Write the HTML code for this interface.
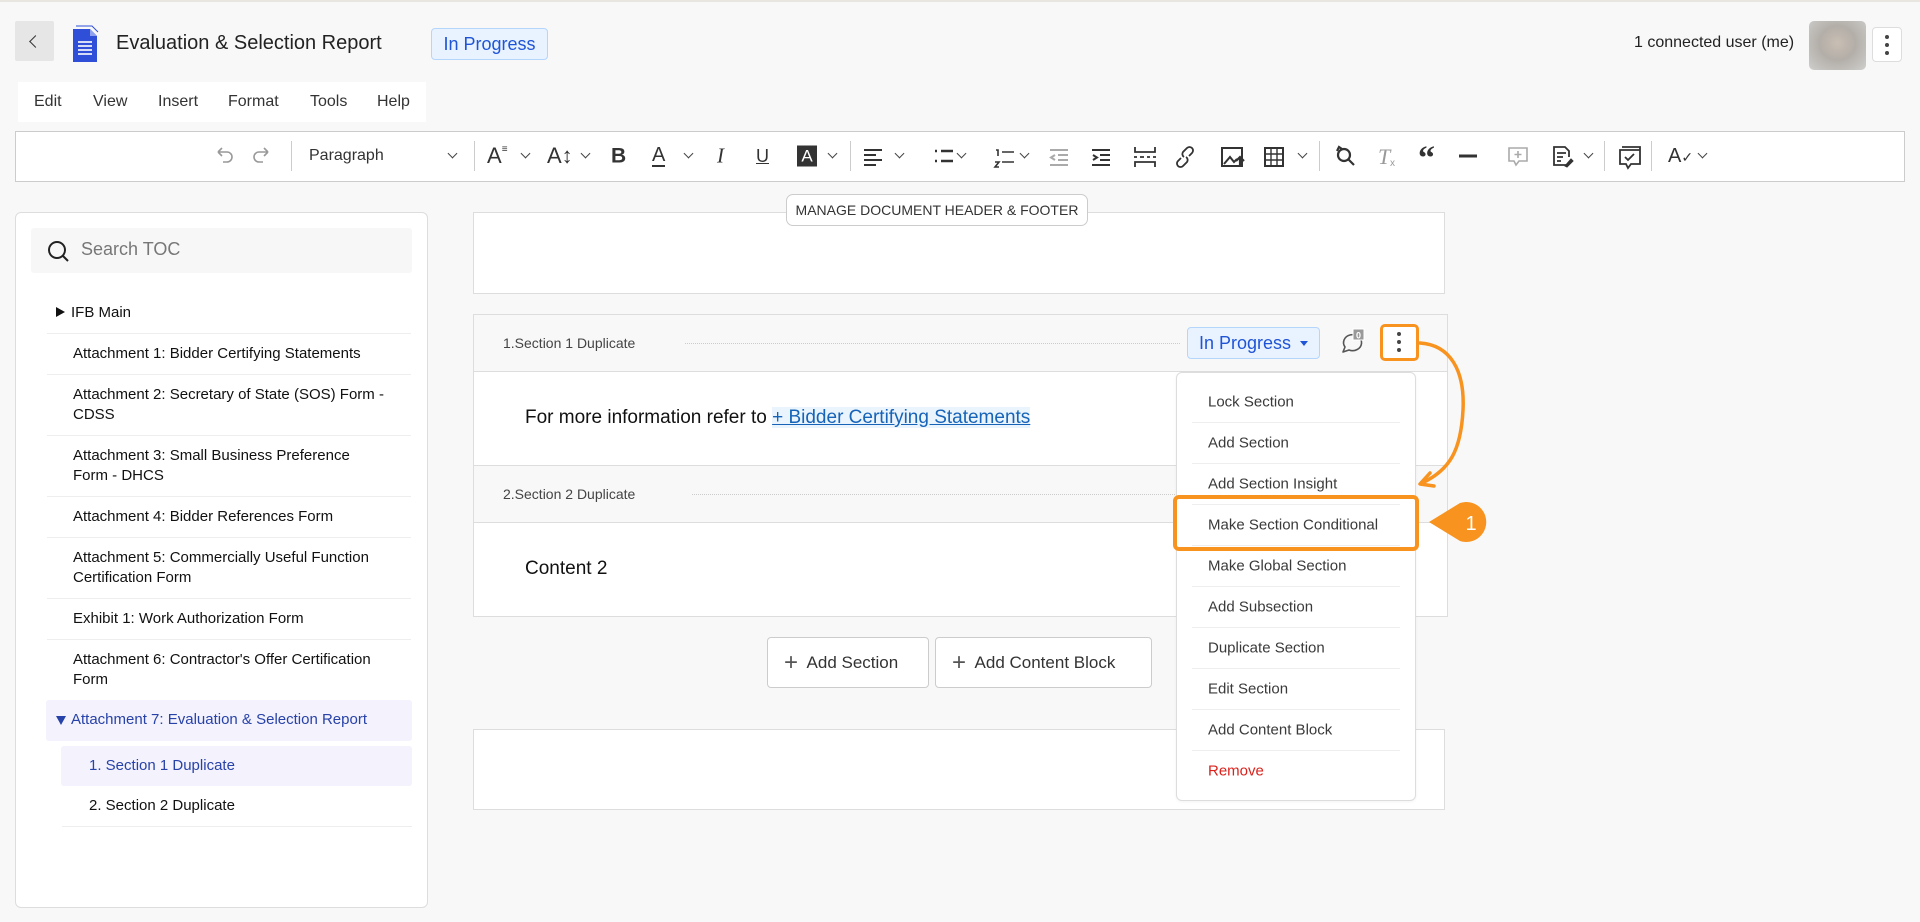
<!DOCTYPE html>
<html><head><meta charset="utf-8"><style>
*{box-sizing:border-box;margin:0;padding:0}
body{width:1920px;height:922px;background:#f8f8f8;font-family:"Liberation Sans",sans-serif;position:relative;overflow:hidden;color:#222}
.a{position:absolute}
.tb{position:absolute;top:156px;transform:translateY(-50%);color:#333;font-size:18px;line-height:1}
.chev{position:absolute;top:150px;width:7px;height:7px;border-right:1.6px solid #444;border-bottom:1.6px solid #444;transform:rotate(45deg)}
.sep{position:absolute;top:141px;width:1px;height:30px;background:#ccc}
.toc{position:absolute;left:73px;font-size:15px;line-height:20px;color:#111;width:330px}
.tl{position:absolute;left:47px;width:364px;height:1px;background:#eee}
.mi{position:absolute;left:1208px;font-size:15px;color:#3a3a3a;transform:translateY(-50%)}
.ms{position:absolute;left:1192px;width:208px;height:1px;background:#eee}
</style></head><body>
<div class="a" style="left:0;top:0;width:1920px;height:2px;background:#e9e5e1"></div>
<!-- header -->
<div class="a" style="left:15px;top:21px;width:39px;height:40px;background:#e6e6e6;border-radius:2px"></div>
<div class="a" style="left:31px;top:37px;width:9px;height:9px;border-left:1.6px solid #333;border-bottom:1.6px solid #333;transform:rotate(45deg)"></div>
<svg class="a" style="left:70px;top:25px" width="30" height="38" viewBox="0 0 30 38"><path d="M3 4h17l7 7v26H3z" fill="#2f4fd8"/><path d="M6 1h16l6 6" fill="none" stroke="#2f4fd8" stroke-width="1"/><path d="M20 4v7h7" fill="#8fa2ee"/><g stroke="#fff" stroke-width="1.6"><line x1="8" y1="17" x2="22" y2="17"/><line x1="8" y1="21" x2="22" y2="21"/><line x1="8" y1="25" x2="22" y2="25"/><line x1="8" y1="29" x2="22" y2="29"/></g></svg>
<div class="a" style="left:116px;top:32px;font-size:20px;color:#222">Evaluation &amp; Selection Report</div>
<div class="a" style="left:431px;top:28px;width:117px;height:32px;background:#e9f3ff;border:1px solid #b5d6fb;border-radius:4px;color:#1f54d6;font-size:18px;line-height:30px;text-align:center">In Progress</div>
<div class="a" style="left:1634px;top:34px;font-size:16px;color:#222">1 connected user (me)</div>
<div class="a" style="left:1809px;top:21px;width:57px;height:49px;border-radius:5px;background:radial-gradient(ellipse at 50% 45%,#c9beb3 0%,#b3aea8 45%,#cfcfcd 100%)"></div>
<div class="a" style="left:1872px;top:27px;width:30px;height:35px;border:1px solid #ddd;border-radius:4px;background:#fff"></div>
<div class="a" style="left:1885px;top:35px;width:4px;height:4px;border-radius:50%;background:#444;box-shadow:0 8px 0 #444,0 16px 0 #444"></div>
<!-- menubar -->
<div class="a" style="left:18px;top:82px;width:408px;height:40px;background:#fff"></div>
<div class="a" style="top:93px;left:34px;font-size:16px;color:#333;word-spacing:0"><span>Edit</span><span style="position:absolute;left:59px">View</span><span style="position:absolute;left:124px">Insert</span><span style="position:absolute;left:194px">Format</span><span style="position:absolute;left:276px">Tools</span><span style="position:absolute;left:343px">Help</span></div>
<!-- toolbar -->
<div class="a" style="left:15px;top:131px;width:1890px;height:51px;background:#fff;border:1px solid #ccc"></div>
<svg class="a" style="left:213px;top:146px" width="60" height="20" viewBox="0 0 60 20" fill="none" stroke="#999" stroke-width="1.6"><path d="M5 6h9a5 5 0 010 10h-4M5 6l4-4M5 6l4 4"/><path d="M55 6h-9a5 5 0 000 10h4M55 6l-4-4M55 6l-4 4"/></svg>
<div class="sep" style="left:291px"></div>
<div class="tb" style="left:309px;font-size:16px">Paragraph</div>
<div class="chev" style="left:449px"></div>
<div class="sep" style="left:474px"></div>
<div class="tb" style="left:487px;font-size:22px">A<span style="font-size:10px;vertical-align:top">≡</span></div><div class="chev" style="left:522px"></div>
<div class="tb" style="left:547px;font-size:22px">A↕</div><div class="chev" style="left:582px"></div>
<div class="tb" style="left:611px;font-size:21px;font-weight:bold">B</div>
<div class="tb" style="left:652px;font-size:20px;border-bottom:2px solid #333;line-height:20px">A</div><div class="chev" style="left:685px"></div>
<div class="tb" style="left:717px;font-size:21px;font-style:italic;font-family:'Liberation Serif',serif">I</div>
<div class="tb" style="left:756px;font-size:18px;text-decoration:underline">U</div>
<div class="tb" style="left:797px;width:20px;height:21px;background:#333;color:#fff;font-size:17px;text-align:center;line-height:21px">A</div><div class="chev" style="left:829px"></div>
<div class="sep" style="left:850px"></div>
<svg class="a" style="left:862px;top:146px" width="600" height="22" viewBox="0 0 600 22" fill="none" stroke="#333" stroke-width="2">
<path d="M2 4h18M2 9h12M2 14h18M2 19h12"/>
<path d="M73 5h2M79 5h12M73 15h2M79 15h12" stroke-width="2.4"/>
<path d="M134 4h2v6M140 6h12M133 16h4l-4 5h4M140 16h12" stroke-width="1.6"/>
<path d="M188 4h18M196 9h10M196 14h10M188 19h18M193 9l-4 2.5 4 2.5" stroke="#aaa"/>
<path d="M230 4h18M238 9h10M238 14h10M230 19h18M231 9l4 2.5-4 2.5" />
<path d="M273 1v5h20V1M273 21v-5h20v5M272 11h3M278 11h4M285 11h3M291 11h3" stroke-width="1.8"/>
<path d="M319 12l-3 3a3.5 3.5 0 005 5l4-4a3.5 3.5 0 00-1-5M327 10l3-3a3.5 3.5 0 00-5-5l-4 4a3.5 3.5 0 001 5" stroke-width="1.8"/>
<rect x="360" y="2" width="20" height="18" stroke-width="2"/><path d="M362 18l6-7 4 5 3-3" /><path d="M378 21v-10M374 15l4-4 4 4" stroke-width="2.2"/>
<rect x="403" y="2" width="18" height="18" stroke-width="2"/><path d="M403 8h18M403 14h18M409 2v18M415 2v18" stroke-width="1.4"/>
</svg>
<div class="chev" style="left:896px"></div>
<div class="chev" style="left:958px"></div>
<div class="chev" style="left:1021px"></div>
<div class="chev" style="left:1299px"></div>
<div class="sep" style="left:1319px"></div>
<svg class="a" style="left:1333px;top:144px" width="380" height="26" viewBox="0 0 380 26" fill="none" stroke="#333" stroke-width="2.2">
<circle cx="11" cy="11" r="6"/><path d="M15 15l6 6M4 7l2-4 3 2"/>
<text x="45" y="20" font-family="Liberation Serif" font-style="italic" font-size="22" fill="#999" stroke="none">T</text><text x="57" y="22" font-size="10" fill="#999" stroke="none" font-family="Liberation Sans">x</text>
<text x="85" y="25" font-family="Liberation Serif" font-size="34" font-weight="bold" fill="#333" stroke="none">“</text>
<path d="M126 12h18" stroke-width="3"/>
<path d="M176 4h18v13h-8l-3 4-2-4h-5z" stroke="#aaa" stroke-width="1.6"/><path d="M185 7v7M181.5 10.5h7" stroke="#aaa" stroke-width="1.6"/>
<path d="M235 21h-14V3h11l4 4v6M224 9h9M224 13h6M224 17h4" stroke-width="1.8"/><path d="M232 22l6-7 2 2-6 6z" fill="#333" stroke-width="1"/>
</svg>
<div class="chev" style="left:1585px"></div>
<div class="sep" style="left:1604px"></div>
<svg class="a" style="left:1617px;top:143px" width="30" height="28" viewBox="0 0 30 28" fill="none" stroke="#333" stroke-width="1.8"><path d="M5 4h18v3M3 7h20v14h-9l-3 4-2-4H3z"/><path d="M8 14l3 3 6-6"/></svg>
<div class="sep" style="left:1651px"></div>
<div class="tb" style="left:1668px;font-size:20px">A<span style="font-size:14px">✓</span></div><div class="chev" style="left:1699px"></div>
<!-- TOC -->
<div class="a" style="left:15px;top:212px;width:413px;height:696px;background:#fff;border:1px solid #ddd;border-radius:6px"></div>
<div class="a" style="left:31px;top:228px;width:381px;height:45px;background:#f7f7f7;border-radius:3px"></div>
<svg class="a" style="left:47px;top:240px" width="24" height="24" viewBox="0 0 24 24" fill="none" stroke="#222" stroke-width="2"><circle cx="10" cy="10" r="8"/><path d="M16 16l5 5"/></svg>
<div class="a" style="left:81px;top:239px;font-size:18px;color:#777">Search TOC</div>
<div class="a" style="left:56px;top:307px;width:0;height:0;border-left:9px solid #111;border-top:5px solid transparent;border-bottom:5px solid transparent"></div>
<div class="toc" style="left:71px;top:303px">IFB Main</div>
<div class="tl" style="top:333px"></div>
<div class="toc" style="top:344px">Attachment 1: Bidder Certifying Statements</div>
<div class="tl" style="top:374px"></div>
<div class="toc" style="top:385px">Attachment 2: Secretary of State (SOS) Form - CDSS</div>
<div class="tl" style="top:435px"></div>
<div class="toc" style="top:446px">Attachment 3: Small Business Preference<br>Form - DHCS</div>
<div class="tl" style="top:496px"></div>
<div class="toc" style="top:507px">Attachment 4: Bidder References Form</div>
<div class="tl" style="top:537px"></div>
<div class="toc" style="top:548px">Attachment 5: Commercially Useful Function Certification Form</div>
<div class="tl" style="top:598px"></div>
<div class="toc" style="top:609px">Exhibit 1: Work Authorization Form</div>
<div class="tl" style="top:639px"></div>
<div class="toc" style="top:650px">Attachment 6: Contractor's Offer Certification Form</div>
<div class="a" style="left:46px;top:700px;width:366px;height:41px;background:#f3f2fd;border-radius:3px"></div>
<div class="a" style="left:56px;top:716px;width:0;height:0;border-top:9px solid #2742a8;border-left:5px solid transparent;border-right:5px solid transparent"></div>
<div class="toc" style="left:71px;top:710px;color:#2742a8">Attachment 7: Evaluation &amp; Selection Report</div>
<div class="a" style="left:61px;top:746px;width:351px;height:40px;background:#f3f2fd;border-radius:3px"></div>
<div class="toc" style="left:89px;top:756px;color:#2742a8">1. Section 1 Duplicate</div>
<div class="toc" style="left:89px;top:796px">2. Section 2 Duplicate</div>
<div class="a" style="left:62px;top:826px;width:350px;height:1px;background:#eee"></div>
<!-- editor -->
<div class="a" style="left:473px;top:212px;width:972px;height:82px;background:#fff;border:1px solid #ddd"></div>
<div class="a" style="left:786px;top:194px;width:302px;height:32px;background:#fff;border:1px solid #ccc;border-radius:7px;font-size:14px;color:#333;line-height:30px;text-align:center">MANAGE DOCUMENT HEADER &amp; FOOTER</div>
<div class="a" style="left:473px;top:314px;width:975px;height:303px;background:#fff;border:1px solid #ddd"></div>
<div class="a" style="left:474px;top:315px;width:973px;height:57px;background:#f8f8f8;border-bottom:1px solid #ddd"></div>
<div class="a" style="left:503px;top:335px;font-size:14px;color:#444">1.Section 1 Duplicate</div>
<div class="a" style="left:685px;top:343px;width:495px;border-top:1px dotted #ccc"></div>
<div class="a" style="left:525px;top:407px;font-size:19px;color:#111">For more information refer to <span style="color:#1663b8;text-decoration:underline;background:#eaf4fd">+ Bidder Certifying Statements</span></div>
<div class="a" style="left:474px;top:465px;width:973px;height:58px;background:#f8f8f8;border-top:1px solid #ddd;border-bottom:1px solid #ddd"></div>
<div class="a" style="left:503px;top:486px;font-size:14px;color:#444">2.Section 2 Duplicate</div>
<div class="a" style="left:692px;top:494px;width:485px;border-top:1px dotted #ccc"></div>
<div class="a" style="left:525px;top:558px;font-size:19px;color:#111">Content 2</div>
<div class="a" style="left:1187px;top:327px;width:133px;height:32px;background:#e9f3ff;border:1px solid #b5d6fb;border-radius:4px;color:#1f54d6;font-size:18px;line-height:30px;padding-left:11px">In Progress</div>
<div class="a" style="left:1300px;top:341px;border-top:5px solid #1f54d6;border-left:4px solid transparent;border-right:4px solid transparent"></div>
<svg class="a" style="left:1338px;top:327px" width="30" height="30" viewBox="0 0 30 30" fill="none" stroke="#555" stroke-width="1.6"><path d="M5 25l2-5a9 8 0 1 1 4 3z" stroke-linejoin="round"/><rect x="15" y="2" width="11" height="11" fill="#999" stroke="#fff" stroke-width="1"/><text x="18" y="11.5" font-size="9" fill="#fff" stroke="none" font-family="Liberation Sans" font-weight="bold">0</text></svg>
<div class="a" style="left:1380px;top:324px;width:39px;height:37px;background:#fff;border:3px solid #f7931e;border-radius:5px"></div>
<div class="a" style="left:1397px;top:332px;width:4px;height:4px;border-radius:50%;background:#444;box-shadow:0 8px 0 #444,0 16px 0 #444"></div>
<!-- add buttons -->
<div class="a" style="left:767px;top:637px;width:162px;height:51px;background:#fff;border:1px solid #ccc;border-radius:4px;font-size:17px;color:#333;line-height:49px;padding-left:16px"><span style="font-size:24px;vertical-align:-2px;color:#555">+</span>&nbsp; Add Section</div>
<div class="a" style="left:935px;top:637px;width:217px;height:51px;background:#fff;border:1px solid #ccc;border-radius:4px;font-size:17px;color:#333;line-height:49px;padding-left:16px"><span style="font-size:24px;vertical-align:-2px;color:#555">+</span>&nbsp; Add Content Block</div>
<div class="a" style="left:473px;top:729px;width:972px;height:81px;background:#fff;border:1px solid #ddd"></div>
<!-- menu -->
<div class="a" style="left:1176px;top:372px;width:240px;height:429px;background:#fff;border:1px solid #ddd;border-radius:6px;box-shadow:0 1px 3px rgba(0,0,0,.05)"></div>
<div class="mi" style="top:402px">Lock Section</div><div class="ms" style="top:422px"></div>
<div class="mi" style="top:443px">Add Section</div><div class="ms" style="top:463px"></div>
<div class="mi" style="top:484px">Add Section Insight</div><div class="ms" style="top:504px"></div>
<div class="mi" style="top:525px">Make Section Conditional</div><div class="ms" style="top:545px"></div>
<div class="mi" style="top:566px">Make Global Section</div><div class="ms" style="top:586px"></div>
<div class="mi" style="top:607px">Add Subsection</div><div class="ms" style="top:627px"></div>
<div class="mi" style="top:648px">Duplicate Section</div><div class="ms" style="top:668px"></div>
<div class="mi" style="top:689px">Edit Section</div><div class="ms" style="top:709px"></div>
<div class="mi" style="top:730px">Add Content Block</div><div class="ms" style="top:750px"></div>
<div class="mi" style="top:771px;color:#d9221c">Remove</div>
<div class="a" style="left:1173px;top:495px;width:246px;height:56px;border:4px solid #f7931e;border-radius:6px"></div>
<!-- callout & arrow -->
<svg class="a" style="left:1410px;top:330px" width="100" height="220" viewBox="0 0 100 220" fill="none">
<path d="M10 13C40 15 55 40 53 80C51 120 40 140 12 153" stroke="#f7931e" stroke-width="3.5" stroke-linecap="round"/>
<path d="M20 143L10 154L24 156" stroke="#f7931e" stroke-width="3.5" stroke-linecap="round" stroke-linejoin="round"/>
<path d="M19 192L50 173A20 20 0 1 1 50 211Z" fill="#f7931e"/>
<text x="61" y="200" font-family="Liberation Sans" font-size="20" fill="#fff" text-anchor="middle">1</text>
</svg>
</body></html>
